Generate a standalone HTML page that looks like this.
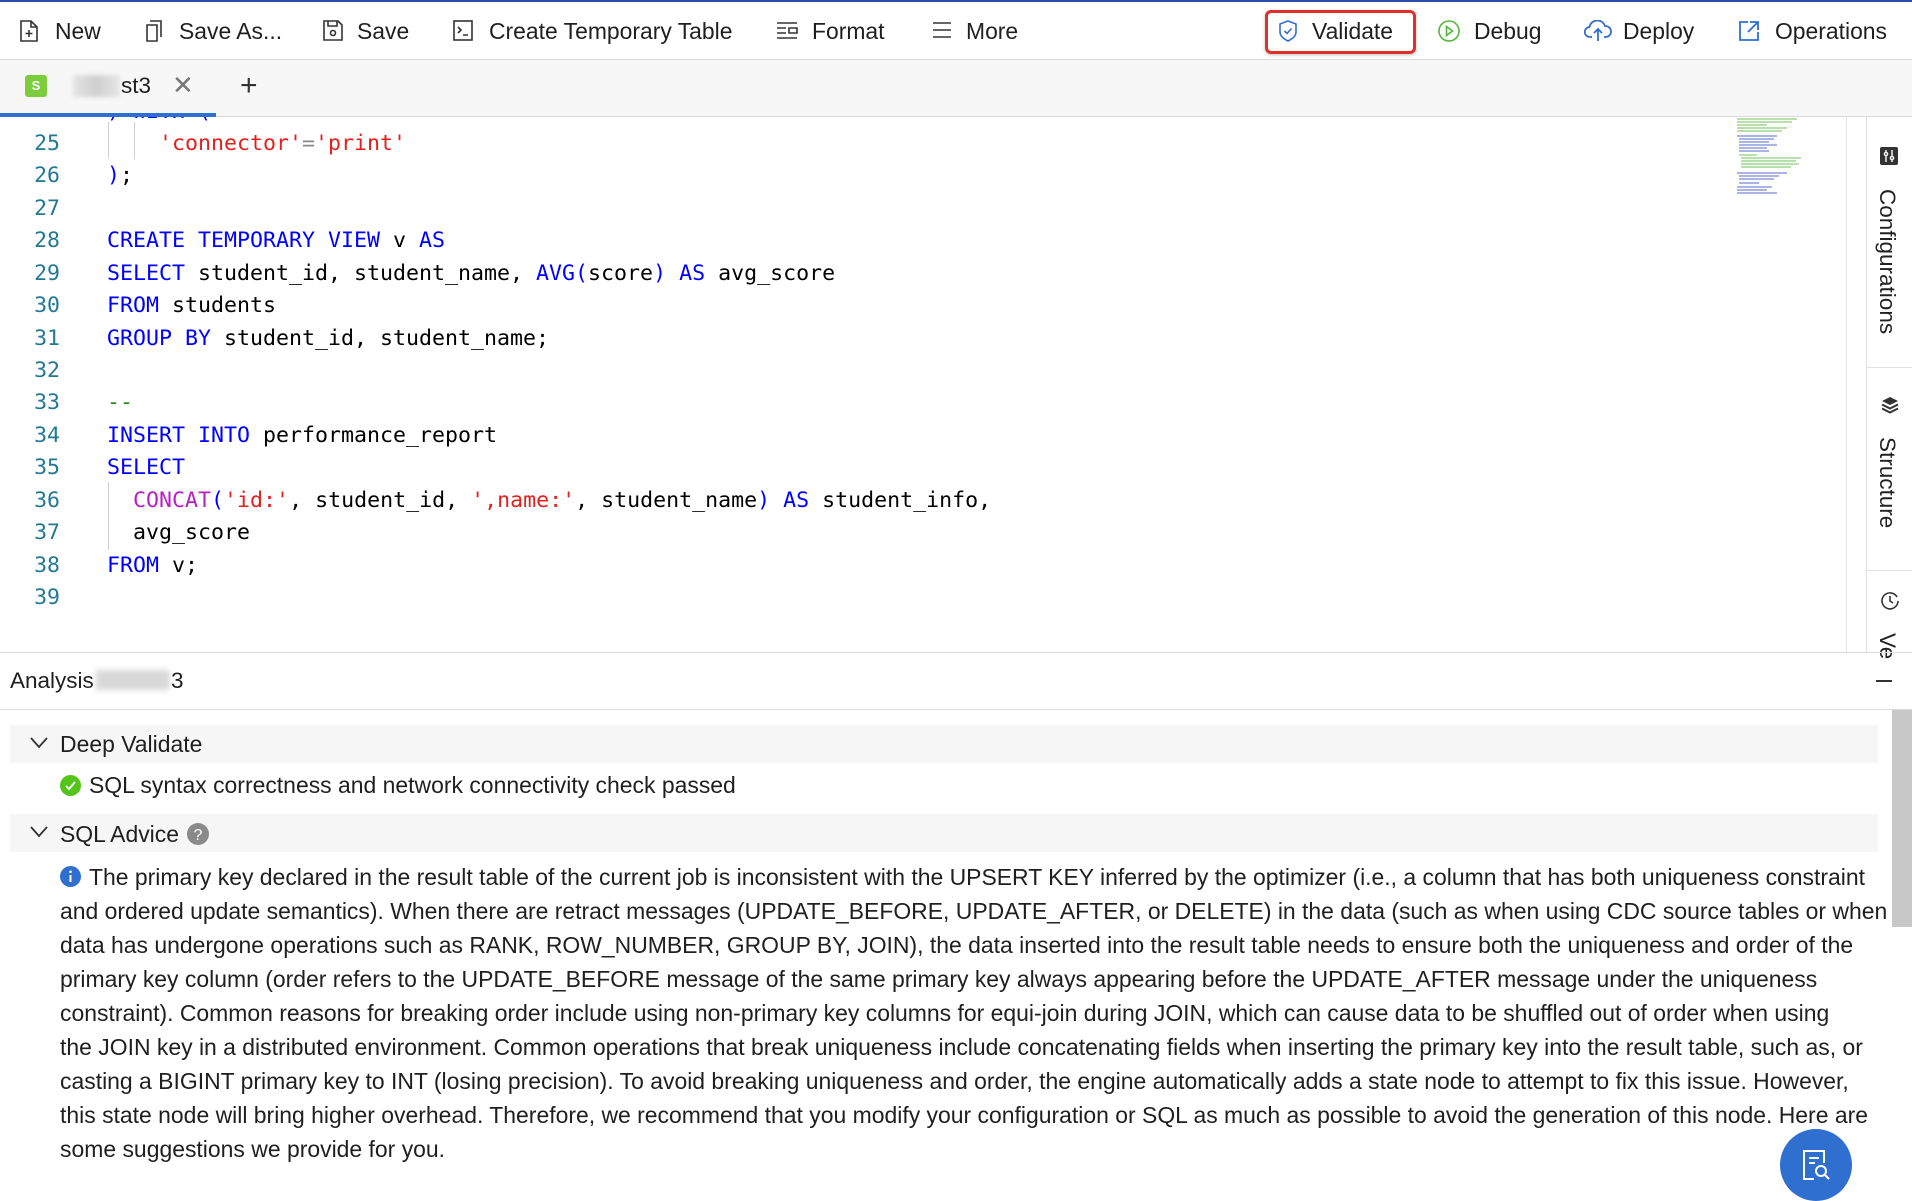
<!DOCTYPE html>
<html><head><meta charset="utf-8">
<style>
*{margin:0;padding:0;box-sizing:border-box}
body{width:1912px;height:1182px;overflow:hidden;background:#fff;font-family:"Liberation Sans",sans-serif;color:#1f1f1f;position:relative}
.abs{position:absolute}
.tb{position:absolute;top:0;left:0;width:1912px;height:60px;border-top:2px solid #2b4fa0;background:#fff;border-bottom:1px solid #dcdcdc}
.ti{position:absolute;top:14px;font-size:22.9px;line-height:30px;color:#1f1f1f;white-space:nowrap}
.ic{position:absolute;top:18px}
.tabs{position:absolute;top:60px;left:0;width:1912px;height:57px;background:#f7f7f7;border-bottom:1px solid #dcdcdc}
.code{position:absolute;top:117px;left:0;width:1847px;height:535px;overflow:hidden;background:#fff}
.ln{position:absolute;left:0;width:60px;text-align:right;font-family:"DejaVu Sans Mono","Liberation Mono",monospace;font-size:21.5px;line-height:32px;color:#237893}
.cl{position:absolute;left:107px;font-family:"DejaVu Sans Mono","Liberation Mono",monospace;font-size:21.6px;line-height:32px;color:#000;white-space:pre;letter-spacing:0}
.k{color:#0000ff}.s{color:#e3211c}.f{color:#b921c4}.c{color:#2d8a1c}
.p{position:absolute;left:60px;font-size:22.95px;line-height:34px;color:#1f1f1f;white-space:nowrap}
</style></head><body>
<div class="tb">
 <svg class="ic" style="left:19px" width="20" height="22" viewBox="0 0 20 22" fill="none" stroke="#333" stroke-width="1.6"><path d="M2 1h10l6 6v14H2z"/><path d="M12 1v6h6"/><path d="M10 10v7M6.5 13.5h7"/></svg>
 <div class="ti" style="left:55px">New</div>
 <svg class="ic" style="left:145px" width="18" height="22" viewBox="0 0 18 22" fill="none" stroke="#333" stroke-width="1.6"><path d="M5 1h11v16"/><path d="M2 5h10v16H2z"/></svg>
 <div class="ti" style="left:179px">Save As...</div>
 <svg class="ic" style="left:323px" width="20" height="21" viewBox="0 0 20 21" fill="none" stroke="#333" stroke-width="1.6"><path d="M1 1h14l4 4v15H1z"/><path d="M5 1v5h9V1"/><circle cx="10" cy="13" r="2.5"/></svg>
 <div class="ti" style="left:357px">Save</div>
 <svg class="ic" style="left:453px" width="20" height="21" viewBox="0 0 20 21" fill="none" stroke="#333" stroke-width="1.6"><rect x="1" y="1" width="18" height="19"/><path d="M5 7l3 3-3 3M10 15h5"/></svg>
 <div class="ti" style="left:489px">Create Temporary Table</div>
 <svg class="ic" style="left:776px" width="22" height="20" viewBox="0 0 22 20" fill="none" stroke="#333" stroke-width="1.6"><path d="M1 3h20M1 8h9M13 8h8v5h-8zM1 13h9M1 18h20"/></svg>
 <div class="ti" style="left:812px">Format</div>
 <svg class="ic" style="left:932px" width="20" height="20" viewBox="0 0 20 20" fill="none" stroke="#333" stroke-width="1.6"><path d="M1 3h18M1 10h18M1 17h18"/></svg>
 <div class="ti" style="left:966px">More</div>
 <div class="abs" style="left:1265px;top:8px;width:151px;height:44px;border:3px solid #e0302a;border-radius:6px;box-shadow:0 1px 3px rgba(0,0,0,.25)"></div>
 <svg class="ic" style="left:1279px" width="18" height="22" viewBox="0 0 18 22" fill="none" stroke="#2f6fd0" stroke-width="1.6"><path d="M9 1l8 3v8c0 4-4 7-8 9-4-2-8-5-8-9V4z"/><path d="M5.5 11l2.5 2.5 4.5-5"/></svg>
 <div class="ti" style="left:1312px">Validate</div>
 <svg class="ic" style="left:1438px" width="22" height="22" viewBox="0 0 22 22" fill="none" stroke="#52b83a" stroke-width="1.6"><circle cx="11" cy="11" r="10"/><path d="M8.5 6.5l6 4.5-6 4.5z"/></svg>
 <div class="ti" style="left:1474px">Debug</div>
 <svg class="ic" style="left:1584px" width="28" height="22" viewBox="0 0 28 22" fill="none" stroke="#2f6fd0" stroke-width="1.8"><path d="M8 17H6a5 5 0 0 1-.5-10A8 8 0 0 1 21 6a5.5 5.5 0 0 1 1 11h-2"/><path d="M14 21V9M10 13l4-4 4 4"/></svg>
 <div class="ti" style="left:1623px">Deploy</div>
 <svg class="ic" style="left:1738px" width="22" height="22" viewBox="0 0 22 22" fill="none" stroke="#2f6fd0" stroke-width="1.8"><path d="M10 2H2v18h18v-8"/><path d="M12 2h8v8M20 2L10 12"/></svg>
 <div class="ti" style="left:1775px">Operations</div>
</div>
<div class="tabs">
 <div class="abs" style="left:25px;top:15px;width:22px;height:22px;background:#7ccd3c;border-radius:3px;color:#fff;font-size:13px;font-weight:bold;text-align:center;line-height:22px">S</div>
 <div class="abs" style="left:73px;top:15px;width:47px;height:22px;background:linear-gradient(90deg,#e4e4e4,#cfcfcf,#e6e6e6);filter:blur(2px)"></div>
 <div class="abs" style="left:121px;top:11px;font-size:22.5px;line-height:30px">st3</div>
 <div class="abs" style="left:172px;top:12px;font-size:26px;line-height:26px;color:#777">✕</div>
 <div class="abs" style="left:240px;top:11px;font-size:30px;line-height:30px;color:#333">+</div>
 <div class="abs" style="left:0;top:53px;width:216px;height:4px;background:#2d6fd2"></div>
</div>
<div class="code">
 <div class="cl k" style="top:-21px">) WITH (</div>
 <div class="ln" style="top:11px">25</div><div class="cl" style="top:11px">    <span class="s">'connector'</span><span style="color:#888">=</span><span class="s">'print'</span></div>
 <div class="abs" style="left:108px;top:5px;width:1px;height:37px;background:#d0d0d0"></div>
 <div class="abs" style="left:134px;top:5px;width:1px;height:37px;background:#d0d0d0"></div>
 <div class="ln" style="top:43px">26</div><div class="cl" style="top:43px"><span class="k">)</span>;</div>
 <div class="ln" style="top:76px">27</div>
 <div class="ln" style="top:108px">28</div><div class="cl" style="top:108px"><span class="k">CREATE TEMPORARY VIEW</span> v <span class="k">AS</span></div>
 <div class="ln" style="top:141px">29</div><div class="cl" style="top:141px"><span class="k">SELECT</span> student_id, student_name, <span class="k">AVG(</span>score<span class="k">) AS</span> avg_score</div>
 <div class="ln" style="top:173px">30</div><div class="cl" style="top:173px"><span class="k">FROM</span> students</div>
 <div class="ln" style="top:206px">31</div><div class="cl" style="top:206px"><span class="k">GROUP BY</span> student_id, student_name;</div>
 <div class="ln" style="top:238px">32</div>
 <div class="ln" style="top:270px">33</div><div class="cl c" style="top:270px">--</div>
 <div class="ln" style="top:303px">34</div><div class="cl" style="top:303px"><span class="k">INSERT INTO</span> performance_report</div>
 <div class="ln" style="top:335px">35</div><div class="cl" style="top:335px"><span class="k">SELECT</span></div>
 <div class="ln" style="top:368px">36</div><div class="cl" style="top:368px">  <span class="f">CONCAT</span><span class="k">(</span><span class="s">'id:'</span>, student_id, <span class="s">',name:'</span>, student_name<span class="k">) AS</span> student_info,</div>
 <div class="abs" style="left:108px;top:365px;width:1px;height:68px;background:#d0d0d0"></div>
 <div class="ln" style="top:400px">37</div><div class="cl" style="top:400px">  avg_score</div>
 <div class="ln" style="top:433px">38</div><div class="cl" style="top:433px"><span class="k">FROM</span> v;</div>
 <div class="ln" style="top:465px">39</div>
 <svg class="abs" style="left:1735px;top:0" width="85" height="80" viewBox="0 0 85 80">
  <g stroke-width="1.3">
  <path d="M2 2h60M2 5h55M2 8h30M2 11h50M2 14h45" stroke="#8fce7a"/>
  <path d="M2 19h40M4 22h35M4 25h30M4 28h38M4 31h28M4 34h30" stroke="#7a88d8"/>
  <path d="M4 38h18M6 41h60M6 44h55M6 47h58M6 50h50" stroke="#8fce7a"/>
  <path d="M2 56h50M4 59h40M4 62h35M4 66h20M2 70h35M2 73h30M2 76h40" stroke="#7a88d8"/>
  </g></svg>
 <div class="abs" style="left:1846px;top:0;width:1px;height:535px;background:#e6e6e6"></div>
 <div class="abs" style="left:1847px;top:234px;width:18px;height:161px;background:#c4c4c4"></div>
</div>
<div class="abs" style="left:1866px;top:117px;width:46px;height:535px;background:#fff;border-left:1px solid #e2e2e2">
 <div class="abs" style="left:13px;top:30px;width:18px;height:18px;background:#333;border-radius:2px"></div>
 <svg class="abs" style="left:15px;top:32px" width="14" height="14" viewBox="0 0 14 14" stroke="#fff" stroke-width="1.4" fill="none"><path d="M4 1v12M10 1v12"/><circle cx="4" cy="5" r="1.6" fill="#333"/><circle cx="10" cy="9" r="1.6" fill="#333"/></svg>
 <div class="abs" style="left:33px;top:72px;transform:rotate(90deg);transform-origin:0 0;font-size:22.5px;white-space:nowrap;color:#222">Configurations</div>
 <div class="abs" style="left:0;top:250px;width:46px;height:1px;background:#e2e2e2"></div>
 <svg class="abs" style="left:13px;top:278px" width="20" height="20" viewBox="0 0 20 20" fill="#333"><path d="M10 2l8 4-8 4-8-4z"/><path d="M2 9.5l8 4 8-4" stroke="#333" stroke-width="2" fill="none"/><path d="M2 13.5l8 4 8-4" stroke="#333" stroke-width="2" fill="none"/></svg>
 <div class="abs" style="left:33px;top:320px;transform:rotate(90deg);transform-origin:0 0;font-size:22.5px;white-space:nowrap;color:#222">Structure</div>
 <div class="abs" style="left:0;top:453px;width:46px;height:1px;background:#e2e2e2"></div>
 <svg class="abs" style="left:13px;top:474px" width="20" height="20" viewBox="0 0 20 20" fill="none" stroke="#333" stroke-width="1.6"><path d="M17 6A8 8 0 1 0 18 10"/><path d="M10 5v5l3 2"/></svg>
 <div class="abs" style="left:33px;top:516px;transform:rotate(90deg);transform-origin:0 0;font-size:22.5px;white-space:nowrap;color:#222">Ve</div>
</div>
<div class="abs" style="left:0;top:652px;width:1912px;height:1px;background:#dcdcdc"></div>
<div class="abs" style="left:10px;top:667px;font-size:22.5px;line-height:28px">Analysis</div>
<div class="abs" style="left:96px;top:670px;width:74px;height:20px;background:#d8d8d8;filter:blur(3px)"></div>
<div class="abs" style="left:171px;top:667px;font-size:22.5px;line-height:28px">3</div>
<div class="abs" style="left:1876px;top:680px;width:16px;height:2px;background:#333"></div>
<div class="abs" style="left:0;top:709px;width:1912px;height:1px;background:#dcdcdc"></div>
<div class="abs" style="left:1892px;top:710px;width:20px;height:217px;background:#c8c8c8"></div>
<div class="abs" style="left:10px;top:725px;width:1868px;height:38px;background:#f6f6f6"></div>
<svg class="abs" style="left:30px;top:737px" width="18" height="12" viewBox="0 0 18 12" fill="none" stroke="#333" stroke-width="1.8"><path d="M1 1l8 9 8-9"/></svg>
<div class="abs" style="left:60px;top:729px;font-size:22.95px;line-height:30px">Deep Validate</div>
<svg class="abs" style="left:60px;top:775px" width="21" height="21" viewBox="0 0 21 21"><circle cx="10.5" cy="10.5" r="10.5" fill="#52c41a"/><path d="M6 11l3 3 6-7" stroke="#fff" stroke-width="1.8" fill="none"/></svg>
<div class="abs" style="left:89px;top:770px;font-size:22.95px;line-height:30px">SQL syntax correctness and network connectivity check passed</div>
<div class="abs" style="left:10px;top:814px;width:1868px;height:38px;background:#f6f6f6"></div>
<svg class="abs" style="left:30px;top:826px" width="18" height="12" viewBox="0 0 18 12" fill="none" stroke="#333" stroke-width="1.8"><path d="M1 1l8 9 8-9"/></svg>
<div class="abs" style="left:60px;top:819px;font-size:22.95px;line-height:30px">SQL Advice</div>
<svg class="abs" style="left:187px;top:823px" width="22" height="22" viewBox="0 0 22 22"><circle cx="11" cy="11" r="11" fill="#8a8a8a"/><text x="11" y="17" text-anchor="middle" font-size="16" fill="#fff" font-family="Liberation Sans">?</text></svg>
<svg class="abs" style="left:60px;top:866px" width="21" height="21" viewBox="0 0 21 21"><circle cx="10.5" cy="10.5" r="10.5" fill="#2f6fd0"/><path d="M10.5 9v7" stroke="#fff" stroke-width="2"/><circle cx="10.5" cy="5.8" r="1.3" fill="#fff"/></svg>
<div class="p" style="top:860px;left:89px">The primary key declared in the result table of the current job is inconsistent with the UPSERT KEY inferred by the optimizer (i.e., a column that has both uniqueness constraint</div>
<div class="p" style="top:894px">and ordered update semantics). When there are retract messages (UPDATE_BEFORE, UPDATE_AFTER, or DELETE) in the data (such as when using CDC source tables or when</div>
<div class="p" style="top:928px">data has undergone operations such as RANK, ROW_NUMBER, GROUP BY, JOIN), the data inserted into the result table needs to ensure both the uniqueness and order of the</div>
<div class="p" style="top:962px">primary key column (order refers to the UPDATE_BEFORE message of the same primary key always appearing before the UPDATE_AFTER message under the uniqueness</div>
<div class="p" style="top:996px">constraint). Common reasons for breaking order include using non-primary key columns for equi-join during JOIN, which can cause data to be shuffled out of order when using</div>
<div class="p" style="top:1030px">the JOIN key in a distributed environment. Common operations that break uniqueness include concatenating fields when inserting the primary key into the result table, such as, or</div>
<div class="p" style="top:1064px">casting a BIGINT primary key to INT (losing precision). To avoid breaking uniqueness and order, the engine automatically adds a state node to attempt to fix this issue. However,</div>
<div class="p" style="top:1098px">this state node will bring higher overhead. Therefore, we recommend that you modify your configuration or SQL as much as possible to avoid the generation of this node. Here are</div>
<div class="p" style="top:1132px">some suggestions we provide for you.</div>
<div class="abs" style="left:1780px;top:1129px;width:72px;height:72px;border-radius:50%;background:#2f6fd0"></div>
<svg class="abs" style="left:1802px;top:1149px" width="30" height="33" viewBox="0 0 30 33" fill="none" stroke="#fff" stroke-width="2"><path d="M12 30H2V2h20v12"/><path d="M7 9h10M7 14h6"/><circle cx="19" cy="22" r="5"/><path d="M23 26l4 4"/></svg>
</body></html>
